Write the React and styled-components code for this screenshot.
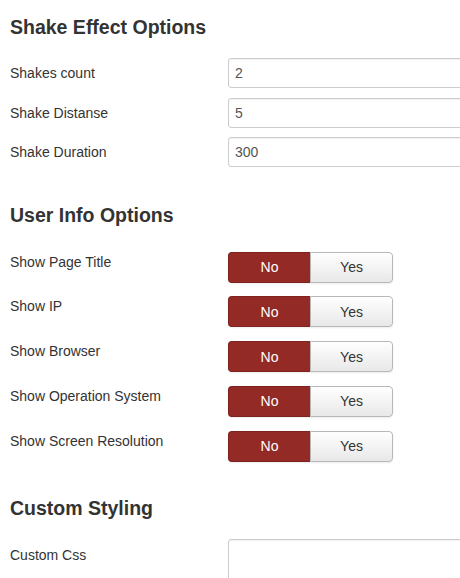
import styled, { createGlobalStyle } from "styled-components"

const GlobalStyle = createGlobalStyle`
  html, body {
    margin: 0;
    padding: 0;
    background: #fff;
    overflow: hidden;
  }
  body {
    font-family: "Liberation Sans", Arial, sans-serif;
    color: #333;
  }
`;

const Page = styled.div`
  width: 460px;
  height: 578px;
  padding: 0 10px;
  box-sizing: border-box;
  overflow: hidden;
`;

const Section = styled.section`
  padding-top: ${(p) => p.$top}px;
`;

const Heading = styled.h2`
  margin: 0 0 ${(p) => p.$gap}px;
  font-size: 19.5px;
  line-height: 24px;
  font-weight: bold;
  color: #333;
`;

const Row = styled.div`
  display: flex;
  align-items: flex-start;
  margin-bottom: ${(p) => p.$gap}px;
`;

const Label = styled.label`
  width: 218px;
  flex: none;
  font-size: 14px;
  line-height: 18px;
  padding-top: ${(p) => p.$pad}px;
  color: #333;
`;

const TextInput = styled.input`
  width: 260px;
  height: 30px;
  flex: none;
  box-sizing: border-box;
  padding: 0 6px;
  border: 1px solid #ccc;
  border-radius: 3px;
  font-family: "Liberation Sans", Arial, sans-serif;
  font-size: 14px;
  color: #555;
  background: #fff;
  box-shadow: inset 0 1px 1px rgba(0, 0, 0, 0.06);
  outline: none;
`;

const TextArea = styled.textarea`
  width: 260px;
  height: 70px;
  flex: none;
  box-sizing: border-box;
  border: 1px solid #ccc;
  border-radius: 3px;
  resize: none;
  background: #fff;
  box-shadow: inset 0 1px 1px rgba(0, 0, 0, 0.06);
  outline: none;
`;

const Toggle = styled.div`
  display: flex;
  width: 165px;
  height: 31px;
  flex: none;
  border-radius: 4px;
  box-shadow: 0 1px 2px rgba(0, 0, 0, 0.08);
`;

const ToggleButton = styled.button`
  flex: 1;
  height: 100%;
  margin: 0;
  padding: 0;
  font-family: "Liberation Sans", Arial, sans-serif;
  font-size: 14px;
  cursor: pointer;
  border: 1px solid ${(p) => (p.$active ? "#7e231f" : "#b8b8b8")};
  background: ${(p) =>
    p.$active ? "#942a25" : "linear-gradient(#ffffff, #e8e8e8)"};
  color: ${(p) => (p.$active ? "#fff" : "#333")};
  &:first-child {
    border-radius: 4px 0 0 4px;
    border-right: none;
  }
  &:last-child {
    border-radius: 0 4px 4px 0;
  }
`;

const shakeFields = [
  { label: "Shakes count", value: "2" },
  { label: "Shake Distanse", value: "5" },
  { label: "Shake Duration", value: "300" },
];

const infoFields = [
  "Show Page Title",
  "Show IP",
  "Show Browser",
  "Show Operation System",
  "Show Screen Resolution",
];

const YesNo = () => (
  <Toggle>
    <ToggleButton $active>No</ToggleButton>
    <ToggleButton>Yes</ToggleButton>
  </Toggle>
);

const App = () => {
  return (
    <Page>
      <GlobalStyle />
      <Section $top={14.5}>
        <Heading $gap={19.5}>Shake Effect Options</Heading>
        {shakeFields.map((f) => (
          <Row key={f.label} $gap={9.5}>
            <Label $pad={6}>{f.label}</Label>
            <TextInput defaultValue={f.value} />
          </Row>
        ))}
      </Section>
      <Section $top={26.5}>
        <Heading $gap={24.5}>User Info Options</Heading>
        {infoFields.map((l) => (
          <Row key={l} $gap={13.75}>
            <Label $pad={1}>{l}</Label>
            <YesNo />
          </Row>
        ))}
      </Section>
      <Section $top={20.5}>
        <Heading $gap={19.5}>Custom Styling</Heading>
        <Row $gap={0}>
          <Label $pad={7}>Custom Css</Label>
          <TextArea />
        </Row>
      </Section>
    </Page>
  )
}

export default App
